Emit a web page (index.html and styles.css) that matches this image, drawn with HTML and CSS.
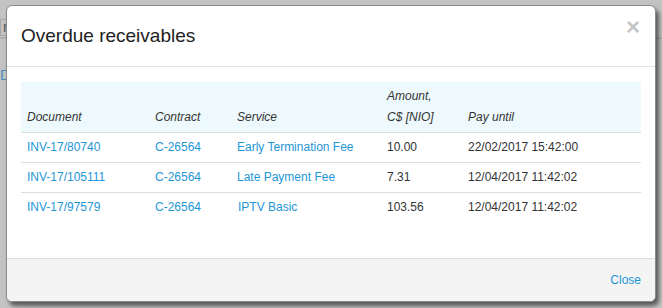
FILE: index.html
```html
<!DOCTYPE html>
<html lang="en">
<head>
  <meta charset="UTF-8" />
  <title>Overdue receivables</title>
  <link rel="stylesheet" href="styles.css">
</head>
<body>
  <div class="page">
    <div class="page-bar"><span class="page-input">r</span></div>
    <div class="page-link">Di</div>
  </div>

  <div class="modal">
    <div class="modal-header">
      <h4 class="modal-title">Overdue receivables</h4>
      <span class="close">&times;</span>
    </div>

    <div class="modal-body">
      <table class="receivables">
        <thead>
          <tr>
            <th class="col-doc">Document</th>
            <th class="col-contract">Contract</th>
            <th class="col-service">Service</th>
            <th class="col-amount">Amount,<br>C$ [NIO]</th>
            <th>Pay until</th>
          </tr>
        </thead>
        <tbody>
          <tr>
            <td><a href="#">INV-17/80740</a></td>
            <td><a href="#">C-26564</a></td>
            <td><a href="#">Early Termination Fee</a></td>
            <td>10.00</td>
            <td>22/02/2017 15:42:00</td>
          </tr>
          <tr>
            <td><a href="#">INV-17/105111</a></td>
            <td><a href="#">C-26564</a></td>
            <td><a href="#">Late Payment Fee</a></td>
            <td>7.31</td>
            <td>12/04/2017 11:42:02</td>
          </tr>
          <tr>
            <td><a href="#">INV-17/97579</a></td>
            <td><a href="#">C-26564</a></td>
            <td><a href="#" class="indent">IPTV Basic</a></td>
            <td>103.56</td>
            <td>12/04/2017 11:42:02</td>
          </tr>
        </tbody>
      </table>
    </div>

    <div class="modal-footer">
      <a href="#">Close</a>
    </div>
  </div>
</body>
</html>
```

FILE: styles.css
```css
body {
  font-family: "Liberation Sans", Arial, sans-serif;
  font-size: 12px;
  color: #333;
  background: #c3c3c3;
  margin: 0;
  padding: 0;
  height: 308px;
  overflow: hidden;
}

a {
  color: #1e96d6;
  text-decoration: none;
}

/* dimmed page under the dialog */
.page {
  padding-top: 19px;
}

.page-bar {
  border-bottom: 2px solid #b0b0b0;
  padding-bottom: 1px;
}

.page-input {
  display: inline-block;
  width: 14px;
  height: 15px;
  border: 1px solid #a8a8a8;
  color: #555;
  font-size: 14px;
  line-height: 14px;
  padding-left: 2px;
}

.page-link {
  margin-top: 27px;
  color: #4a8fb8;
  font-size: 15px;
}

/* dialog */
.modal {
  position: absolute;
  left: 6px;
  top: 5px;
  width: 648px;
  background: #fff;
  border: 1px solid #8a8a8a;
  border-radius: 6px;
  box-shadow: 3px 4px 4px rgba(0, 0, 0, 0.55);
  overflow: hidden;
}

.modal-header {
  display: flex;
  justify-content: space-between;
  align-items: flex-start;
  padding: 15px 14px;
  border-bottom: 1px solid #e5e5e5;
}

.modal-title {
  margin: 0;
  font-size: 19px;
  font-weight: normal;
  line-height: 30px;
  color: #222;
}

.close {
  font-size: 24px;
  font-weight: bold;
  line-height: 24px;
  color: #c6c6c6;
  margin-top: -6px;
  margin-right: 1px;
}

.modal-body {
  padding: 15px 14px 36px;
}

.receivables {
  width: 100%;
  border-collapse: collapse;
}

.receivables th {
  background: #eef9fd;
  font-weight: normal;
  font-style: italic;
  text-align: left;
  vertical-align: bottom;
  line-height: 21px;
  padding: 4px 6px;
  border-bottom: 1px solid #dddddd;
}

.receivables td {
  line-height: 19px;
  padding: 5px 6px;
  border-bottom: 1px solid #dddddd;
}

.receivables tbody tr:last-child td {
  border-bottom: none;
}

.col-doc { width: 116px; }
.col-contract { width: 70px; }
.col-service { width: 138px; }
.col-amount { width: 69px; }

.indent {
  margin-left: 1px;
}

.modal-footer {
  display: flex;
  justify-content: flex-end;
  align-items: center;
  height: 42px;
  padding: 0 14px;
  background: #f4f4f4;
  border-top: 1px solid #dedede;
}
```
